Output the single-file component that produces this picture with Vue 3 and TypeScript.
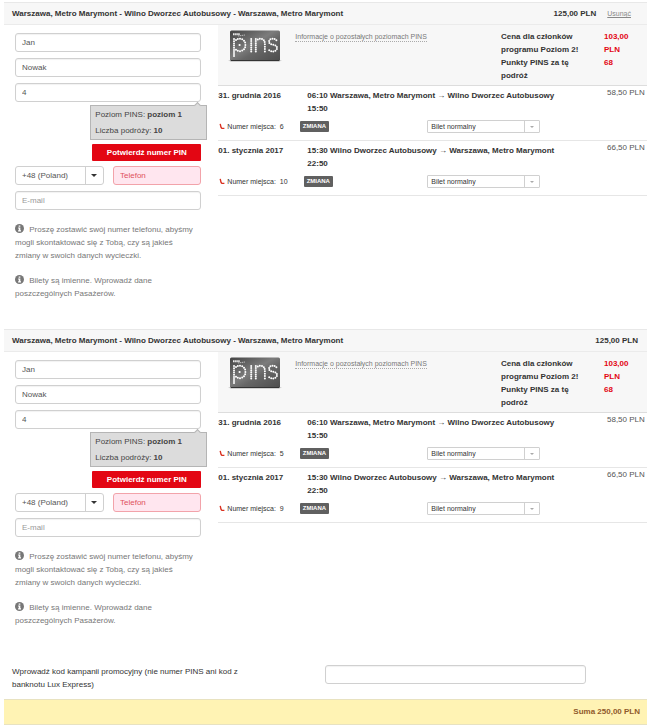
<script setup lang="ts">
interface Leg {
  date: string
  route: string
  arrival: string
  seat: number
  price: string
}

interface Booking {
  id: string
  removable: boolean
  legs: Leg[]
}

const title = 'Warszawa, Metro Marymont - Wilno Dworzec Autobusowy - Warszawa, Metro Marymont'

function makeLegs(outSeat: number, backSeat: number): Leg[] {
  return [
    {
      date: '31. grudnia 2016',
      route: '06:10 Warszawa, Metro Marymont → Wilno Dworzec Autobusowy',
      arrival: '15:50',
      seat: outSeat,
      price: '58,50 PLN',
    },
    {
      date: '01. stycznia 2017',
      route: '15:30 Wilno Dworzec Autobusowy → Warszawa, Metro Marymont',
      arrival: '22:50',
      seat: backSeat,
      price: '66,50 PLN',
    },
  ]
}

const bookings: Booking[] = [
  { id: 'a', removable: true, legs: makeLegs(6, 10) },
  { id: 'b', removable: false, legs: makeLegs(5, 9) },
]

// Dots of the loyalty card logo, in card coordinates
const dots: [number, number][] = [
  [6, 9], [6, 11.2], [6, 13.4], [6, 15.6], [6, 17.8], [6, 20], [6, 22], [6, 24], [6, 26],
  [8, 10], [9.8, 9], [12, 8.7], [14.2, 9.3], [16, 10.7], [17.1, 12.6], [17.4, 14.9],
  [17.1, 17.2], [16, 19.2], [14.2, 20.6], [12, 21.2], [9.8, 20.8], [8, 19.8],
  [23.2, 9], [23.2, 11.1], [23.2, 13.2], [23.2, 15.3], [23.2, 17.4], [23.2, 19.5], [23.2, 21.5],
  [27.8, 9], [27.8, 11.1], [27.8, 13.2], [27.8, 15.3], [27.8, 17.4], [27.8, 19.5], [27.8, 21.5],
  [29.8, 9.6], [31.8, 8.8], [34, 9], [35.8, 10.2], [36.7, 12.1], [36.9, 14.3],
  [36.9, 16.7], [36.9, 19.1], [36.9, 21.5],
  [48.4, 10.2], [46.6, 9], [44.5, 8.7], [42.4, 9.3], [41.1, 10.9], [41.4, 13], [43.2, 14.2],
  [45.3, 14.8], [47.4, 15.5], [48.9, 17], [48.9, 19.1], [47.4, 20.8], [45.3, 21.5], [43.2, 21.3], [41.2, 20.3],
]
</script>

<template>
  <main class="page">
    <section v-for="b in bookings" :key="b.id" class="booking">
      <header class="head">
        <h2 class="title">{{ title }}</h2>
        <span class="total">125,00 PLN</span>
        <a v-if="b.removable" href="#" class="remove">Usunąć</a>
      </header>
      <div class="columns">
        <form class="passenger" @submit.prevent>
          <input class="field" type="text" value="Jan" aria-label="Imię" />
          <input class="field" type="text" value="Nowak" aria-label="Nazwisko" />
          <div class="pin">
            <input class="field" type="text" value="4" aria-label="Numer PIN" />
            <div class="tip" role="tooltip">
              <p>Poziom PINS: <b>poziom 1</b></p>
              <p>Liczba podróży: <b>10</b></p>
            </div>
          </div>
          <button class="confirm" type="button">Potwierdź numer PIN</button>
          <div class="phone">
            <span class="pick code">
              <select aria-label="Kod kraju"><option>+48 (Poland)</option></select>
            </span>
            <input class="field error" type="tel" placeholder="Telefon" aria-label="Telefon" />
          </div>
          <input class="field" type="email" placeholder="E-mail" aria-label="E-mail" />
          <div class="notes">
            <p>
              <svg class="info" viewBox="0 0 16 16" aria-hidden="true">
                <circle cx="8" cy="8" r="8" fill="#777" />
                <path d="M6.5 2.5h3v2.4h-3zM5.5 6.3h4v5h1.2v1.9H5.5v-1.9h1.2V8.2H5.5z" fill="#fff" />
              </svg>
              Proszę zostawić swój numer telefonu, abyśmy mogli skontaktować się z Tobą, czy są jakieś zmiany w swoich danych wycieczki.
            </p>
            <p>
              <svg class="info" viewBox="0 0 16 16" aria-hidden="true">
                <circle cx="8" cy="8" r="8" fill="#777" />
                <path d="M6.5 2.5h3v2.4h-3zM5.5 6.3h4v5h1.2v1.9H5.5v-1.9h1.2V8.2H5.5z" fill="#fff" />
              </svg>
              Bilety są imienne. Wprowadź dane poszczególnych Pasażerów.
            </p>
          </div>
        </form>

        <div class="trip">
          <div class="loyalty">
            <svg class="card" viewBox="0 0 54 32" role="img" aria-label="PINS">
              <defs>
                <linearGradient :id="'card-' + b.id" x1="0" y1="0" x2="1" y2="1">
                  <stop offset="0" stop-color="#444" />
                  <stop offset="0.45" stop-color="#7c7c7c" />
                  <stop offset="0.6" stop-color="#666" />
                  <stop offset="1" stop-color="#4c4c4c" />
                </linearGradient>
              </defs>
              <path d="M0 30.5h54l-3 1H3z" fill="#aaa" />
              <rect x="2" y="0.5" width="50" height="30.5" rx="1.5" :fill="`url(#card-${b.id})`" />
              <path d="M3 30.5h48" stroke="#333" />
              <path d="M5 4.2h7" stroke="#eee" stroke-width="2" stroke-dasharray="1.6 0.5" />
              <path d="M10 6l7-1" stroke="#bbb" stroke-width="1" stroke-dasharray="1.4 0.6" />
              <g fill="#fff">
                <circle v-for="(d, i) in dots" :key="i" :cx="d[0]" :cy="d[1]" r="1" />
                <circle cx="11.6" cy="15" r="1.1" />
              </g>
            </svg>
            <div class="more"><a href="#">Informacje o pozostałych poziomach PINS</a></div>
            <p class="offer">Cena dla członków programu Poziom 2! Punkty PINS za tę podróż</p>
            <p class="points">103,00 PLN<br />68</p>
          </div>
          <article v-for="leg in b.legs" :key="leg.date" class="leg">
            <b class="date">{{ leg.date }}</b>
            <b class="route">{{ leg.route }}<br />{{ leg.arrival }}</b>
            <span class="price">{{ leg.price }}</span>
            <div class="seat">
              <svg class="seat-icon" viewBox="0 0 6 7" aria-hidden="true">
                <path d="M1.2 0.8L2.1 4.6Q2.4 5.4 3.2 5.4H5.4" fill="none" stroke="#d9301f" stroke-width="1.4" />
              </svg>
              <span>Numer miejsca:&nbsp; {{ leg.seat }}</span>
              <button class="change" type="button">ZMIANA</button>
            </div>
            <span class="pick ticket">
              <select aria-label="Rodzaj biletu"><option>Bilet normalny</option></select>
            </span>
          </article>
        </div>
      </div>
    </section>

    <div class="promo">
      <label for="promo-code">Wprowadź kod kampanii promocyjny (nie numer PINS ani kod z banknotu Lux Express)</label>
      <input id="promo-code" class="field" type="text" />
    </div>
    <footer class="sum">Suma 250,00 PLN</footer>
  </main>
</template>

<style>
body {
  margin: 0;
  background: #fff;
}
</style>

<style scoped>
* {
  box-sizing: border-box;
}
.page {
  padding: 2px 3px 2px 4px;
  font: 8px/13px "Liberation Sans", Arial, sans-serif;
  color: #333;
}
p,
h2 {
  margin: 0;
}
input,
select,
button {
  font-family: inherit;
  font-size: 8px;
  margin: 0;
}
.head {
  display: flex;
  align-items: center;
  height: 23px;
  padding: 0 9px 0 8px;
  background: #f7f7f7;
  border-top: 1px solid #e8e8e8;
  border-bottom: 1px solid #ebebeb;
}
.title {
  flex: 1;
  font-size: 8px;
  font-weight: bold;
}
.total {
  font-weight: bold;
}
.remove {
  margin: 0 7px 0 11px;
  font-size: 7px;
  color: #888;
}
.columns {
  display: grid;
  grid-template-columns: 1fr 2fr;
}
.passenger {
  display: flex;
  flex-direction: column;
  gap: 6px;
  padding: 8px 17px 29px 11px;
}
.field {
  display: block;
  width: 100%;
  min-width: 0;
  height: 19px;
  padding: 0 6px;
  border: 1px solid #d0d0d0;
  border-radius: 3px;
  background: #fff;
  color: #555;
  box-shadow: inset 0 1px 1px #f2f2f2;
}
.field::placeholder {
  color: #999;
  opacity: 1;
}
.field.error {
  background: #ffe6ef;
  border-color: #f2a3aa;
  box-shadow: none;
}
.field.error::placeholder {
  color: #e0525c;
}
.pin {
  position: relative;
}
.tip {
  position: absolute;
  top: 22px;
  right: -6px;
  width: 117px;
  padding: 1px 4px;
  border: 1px solid #b5b5b5;
  background: #dcdcdc;
  line-height: 15px;
  color: #444;
}
.tip p + p {
  margin-top: 1px;
}
.tip::before {
  content: "";
  position: absolute;
  top: -3px;
  right: 6px;
  width: 4px;
  height: 4px;
  border: 1px solid #b5b5b5;
  border-width: 1px 0 0 1px;
  background: #dcdcdc;
  transform: rotate(45deg);
}
.confirm {
  align-self: flex-end;
  width: 109px;
  height: 17px;
  margin-top: 36px;
  padding: 0;
  border: 0;
  border-radius: 1px;
  background: #e30613;
  color: #fff;
  font-weight: bold;
}
.phone {
  display: grid;
  grid-template-columns: 89px 1fr;
  gap: 9px;
  margin-top: -1px;
}
.pick {
  position: relative;
  display: block;
}
.pick select {
  display: block;
  width: 100%;
  height: 100%;
  border: 1px solid #d0d0d0;
  border-radius: 3px;
  background: #fff;
  color: #555;
  appearance: none;
}
.pick::before {
  content: "";
  position: absolute;
  top: 1px;
  bottom: 1px;
  right: 18px;
  border-left: 1px solid #d0d0d0;
  pointer-events: none;
}
.pick::after {
  content: "";
  position: absolute;
  top: 8px;
  right: 7px;
  border: 3px solid transparent;
  border-top-color: #333;
  border-bottom: 0;
  pointer-events: none;
}
.code {
  height: 19px;
}
.code select {
  padding: 0 20px 0 6px;
}
.notes {
  display: grid;
  gap: 12px;
  margin-top: 7px;
  padding-right: 6px;
  color: #777;
}
.info {
  width: 9px;
  height: 9px;
  margin-right: 3px;
  vertical-align: -1px;
}
.loyalty {
  display: grid;
  grid-template-columns: 54px 1fr 93px 36px;
  height: 61px;
  padding: 5px 17px 0 10px;
  background: #f7f7f7;
  border-bottom: 1px solid #ddd;
}
.card {
  width: 54px;
  height: 32px;
}
.more {
  padding-left: 13px;
}
.more a {
  display: inline-block;
  margin-top: 2px;
  border-bottom: 1px dotted #aaa;
  font-size: 7px;
  line-height: 9px;
  color: #777;
  text-decoration: none;
}
.offer {
  padding-right: 8px;
  font-weight: bold;
}
.points {
  padding-left: 10px;
  font-weight: bold;
  color: #e30613;
}
.leg {
  display: grid;
  grid-template-columns: 89px 120px 1fr 40px;
  grid-template-rows: 29px 13px;
  row-gap: 5px;
  padding-bottom: 7px;
  border-bottom: 1px solid #e6e6e6;
}
.date,
.route {
  padding-top: 3px;
}
.route {
  grid-column: 2 / 4;
}
.price {
  color: #555;
  white-space: nowrap;
}
.seat {
  grid-column: 1 / 3;
  display: flex;
  align-items: center;
  font-size: 7px;
}
.seat-icon {
  width: 6px;
  height: 7px;
  margin: 0 2px 0 1px;
}
.change {
  height: 11px;
  margin-left: 16px;
  padding: 0 3px;
  border: 0;
  border-radius: 1px;
  background: #606060;
  color: #fff;
  font-size: 6px;
  font-weight: bold;
  line-height: 11px;
}
.ticket {
  width: 113px;
}
.ticket select {
  padding: 0 16px 0 3px;
  color: #333;
  font-size: 7px;
  line-height: 11px;
  border-radius: 1px;
}
.ticket::before {
  right: 15px;
}
.ticket::after {
  top: 6px;
  right: 6px;
  border-width: 2px 2px 0;
  border-top-color: #aaa;
}
.promo {
  display: grid;
  grid-template-columns: 240px 261px;
  justify-content: space-between;
  padding: 9px 61px 8px 8px;
}
.promo label {
  min-height: 26px;
}
.sum {
  padding: 5px 7px 6px;
  border-top: 1px solid #e8e2c0;
  border-bottom: 1px solid #e8e2c0;
  background: #fff3b4;
  color: #8f5a2b;
  font-weight: bold;
  text-align: right;
}
</style>
